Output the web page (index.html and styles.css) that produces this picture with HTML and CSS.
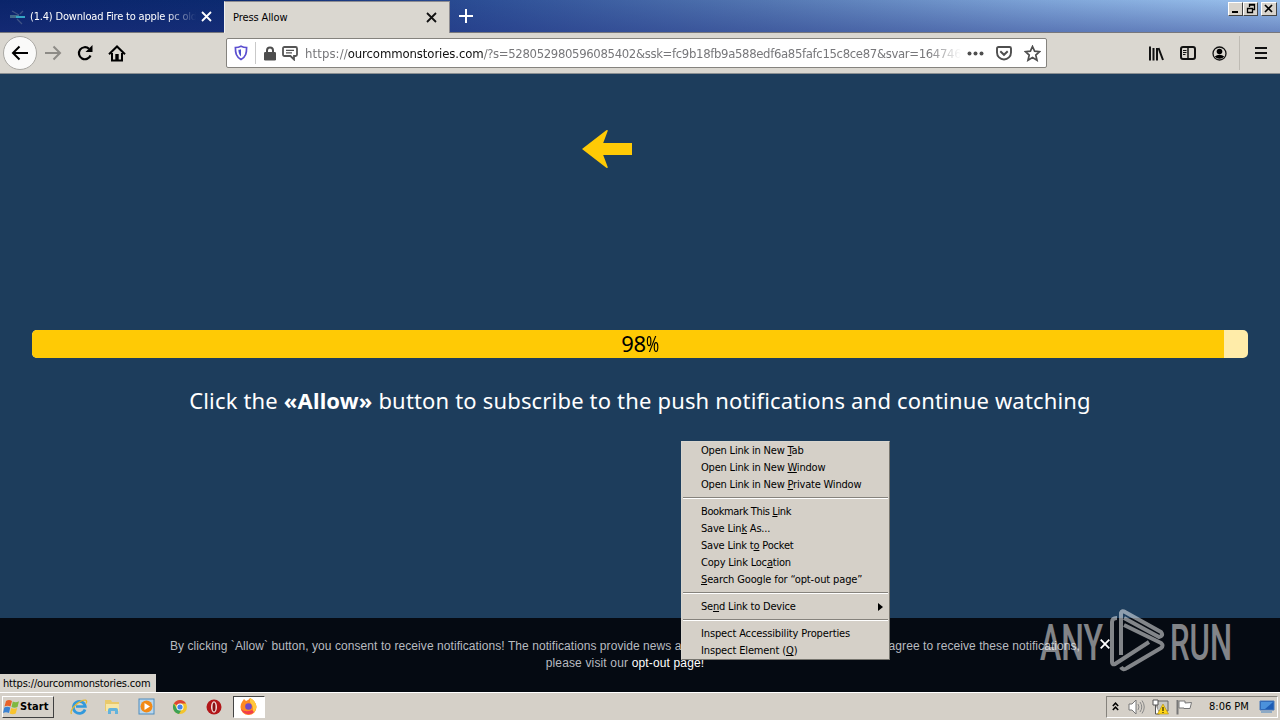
FILE: index.html
```html
<!DOCTYPE html>
<html lang="en">
<head>
<meta charset="utf-8">
<title>Press Allow</title>
<link rel="stylesheet" href="styles.css">
</head>
<body>
<div class="screen">
  <header class="titlebar">
    <div class="tab tab-back">
      <svg class="favicon" width="18" height="18" viewBox="0 0 18 18"><path d="M1 7h9v3H1z" fill="#426a88"/><path d="M7 8h9v2H7z" fill="#35a5c4"/><path d="M3 3l7 4M8 11l5 5M11 6l3-3" stroke="#3f5385" stroke-width="1.300"/></svg>
      <span class="tab-title faded">(1.4) Download Fire to apple pc old</span>
      <svg class="close" width="11" height="11" viewBox="0 0 11 11"><path d="M1 1l9 9M10 1l-9 9" stroke="#fff" stroke-width="1.800"/></svg>
    </div>
    <div class="tab tab-front">
      <span class="tab-title">Press Allow</span>
      <svg class="close" width="11" height="11" viewBox="0 0 11 11"><path d="M1 1l9 9M10 1l-9 9" stroke="#111" stroke-width="1.800"/></svg>
    </div>
    <svg class="newtab" width="14" height="14" viewBox="0 0 14 14"><path d="M7 0v14M0 7h14" stroke="#fff" stroke-width="2"/></svg>
    <div class="winbtns">
      <span class="wbtn"><svg width="14" height="12"><path d="M3 8h6v2H3z"/></svg></span>
      <span class="wbtn"><svg width="14" height="12"><path d="M5.500 4V1.500h5v5H9M5 2h6M3.500 5.500h5v4h-5zM3 5.500h6" fill="none" stroke="#000" stroke-width="1.300"/></svg></span>
      <span class="wbtn last"><svg width="14" height="12"><path d="M3 2l7 7M10 2l-7 7" stroke="#000" stroke-width="1.700"/></svg></span>
    </div>
  </header>

  <nav class="toolbar">
    <span class="back"><svg width="18" height="16" viewBox="0 0 18 16"><path d="M17 8H2M8.500 1.500L2 8l6.500 6.500" fill="none" stroke="#000" stroke-width="2"/></svg></span>
    <svg class="fwd" width="18" height="16" viewBox="0 0 18 16"><path d="M1 8h14M9.500 1.500L16 8l-6.500 6.500" fill="none" stroke="#8d8b86" stroke-width="2"/></svg>
    <svg class="reload" width="16" height="16" viewBox="0 0 16 16"><path d="M13.500 10.500A6 6 0 1 1 12 3.800" fill="none" stroke="#000" stroke-width="2.200"/><path d="M15.500 0v7H8.500z"/></svg>
    <svg class="home" width="18" height="17" viewBox="0 0 18 17"><path d="M1 9.300L9 1.500l8 7.800" fill="none" stroke="#000" stroke-width="2"/><path d="M4 8v7.500h10V8" fill="none" stroke="#000" stroke-width="2"/><path d="M7.300 9h3.400v6H7.300z"/></svg>
    <div class="urlbar">
      <svg class="shield" width="14" height="16" viewBox="0 0 14 16"><path d="M7 1.200c2 1 3.800 1.300 5.600 1.300 0 5.500-.6 9.300-5.600 12-5-2.700-5.600-6.500-5.600-12C3.200 2.500 5 2.200 7 1.200z" fill="#fff" stroke="#5c4fd0" stroke-width="1.700"/><path d="M7 4.200v7.200C5 9.500 4.500 7.500 4.400 4.800 5.300 4.700 6.200 4.500 7 4.200z" fill="#4b50cf"/></svg>
      <i class="usep"></i>
      <svg class="lock" width="12" height="15" viewBox="0 0 12 15"><path d="M3 7V4.500a3 3 0 0 1 6 0V7" fill="none" stroke="#4e4e4e" stroke-width="2"/><rect y="6" width="12" height="8.500" rx="1.300" fill="#4e4e4e"/></svg>
      <svg class="bubble" width="16" height="15" viewBox="0 0 16 15"><path d="M2.500 1h11Q15 1 15 2.500v6Q15 10 13.500 10H12v3.500L8.500 10h-6Q1 10 1 8.500v-6Q1 1 2.500 1z" fill="#fff" stroke="#555" stroke-width="1.800"/><path d="M4 4.300h8M4 6.900h6" stroke="#555" stroke-width="1.200"/></svg>
      <span class="url"><span class="scheme">https://</span><b>ourcommonstories.com</b>/?s=528052980596085402&amp;ssk=fc9b18fb9a588edf6a85fafc15c8ce87&amp;svar=164746</span>
      <svg class="dots" width="17" height="5" viewBox="0 0 17 5" fill="#4e4e4e"><circle cx="2.500" cy="2.500" r="2"/><circle cx="8.500" cy="2.500" r="2"/><circle cx="14.500" cy="2.500" r="2"/></svg>
      <svg class="pocket" width="16" height="15" viewBox="0 0 16 15"><path d="M2.500 1h11Q15 1 15 2.500V6.500a7 7 0 0 1-14 0V2.500Q1 1 2.500 1z" fill="none" stroke="#4e4e4e" stroke-width="1.900"/><path d="M4.300 5.300L8 8.800l3.700-3.500" fill="none" stroke="#4e4e4e" stroke-width="2"/></svg>
      <svg class="star" width="17" height="17" viewBox="0 0 17 17"><path d="M8.500 1.500l2.100 4.700 5 .5-3.800 3.400 1.200 5.100-4.500-2.700L4 15.200l1.200-5.100-3.800-3.400 5-.5z" fill="none" stroke="#4e4e4e" stroke-width="1.700"/></svg>
    </div>
    <svg class="library" width="16" height="15" viewBox="0 0 16 15"><path d="M2 0.500v14M5.500 2v12.500M9 2v12.500M10.500 2l4.500 12" stroke="#111" stroke-width="2"/></svg>
    <svg class="sidebar" width="16" height="14" viewBox="0 0 16 14"><rect x="1" y="1" width="14" height="12" rx="2" fill="none" stroke="#111" stroke-width="2"/><path d="M8 1v12" stroke="#111" stroke-width="1.500"/><path d="M3 4.500h3.500M3 6.500h3.500M3 8.500h2.500" stroke="#111"/></svg>
    <svg class="account" width="15" height="15" viewBox="0 0 15 15"><circle cx="7.500" cy="7.500" r="6.500" fill="none" stroke="#111" stroke-width="1.300"/><circle cx="7.500" cy="5.500" r="2.800"/><path d="M2.800 10.500q2-1.700 4.700-1.700t4.700 1.700q-1.700 2.200-4.700 2.200t-4.700-2.200z"/></svg>
    <i class="tsep"></i>
    <svg class="burger" width="12" height="12" viewBox="0 0 12 12"><path d="M0 1h12M0 6h12M0 11h12" stroke="#111" stroke-width="2"/></svg>
  </nav>

  <main class="page">
    <svg class="arrow" width="50" height="40" viewBox="0 0 50 40"><path d="M0 20L24.300 1.300Q26 .5 25.700 2L21.200 14H50v12H21.200l4.500 12q.3 1.500-1.400.7z" fill="#ffca05"/></svg>
    <div class="progress"><div class="fill" style="width:98%"></div><span class="percent">98<i>%</i></span></div>
    <p class="message">Click the <b>«Allow»</b> button to subscribe to the push notifications and continue watching</p>
    <footer class="consent">
      <p class="line1"><span>By clicking `Allow` button, you consent to receive notifications! The notifications provide news and updates.</span><span>If you don't agree to receive these notifications,</span></p>
      <p class="line2">please visit our <a>opt-out page!</a></p>
      <svg class="dismiss" width="10" height="10" viewBox="0 0 10 10"><path d="M.7.7l8.600 8.600M9.300.7L.7 9.300" stroke="#fff" stroke-width="1.800"/></svg>
    </footer>
    <div class="status">https://ourcommonstories.com</div>
  </main>

  <div class="taskbar">
    <div class="start"><svg width="17" height="16" viewBox="0 0 17 16"><path d="M3 2q3-2 6 0L7.500 7.500q-3-1.500-6 0z" fill="#e8622a"/><path d="M9.800 2.500q3 1.500 6.200-.3L14.500 8q-3 1.500-6 0z" fill="#7fb841"/><path d="M1.300 8.500q3-1.500 6 0L6 14q-3-1.500-6 0z" fill="#3b82d2"/><path d="M8.200 9q3 1.500 6 0l-1.500 5.500q-3 1.500-6 0z" fill="#f8c32d"/></svg>Start</div>
    <span class="app"><svg width="18" height="18" viewBox="0 0 18 18"><path d="M15 11.500a6 6 0 1 1 .3-3H6" fill="none" stroke="#3299dc" stroke-width="2.700"/><path d="M1.500 16C-1 12 9 2 15.500 2.200q2 .5.500 3.300" fill="none" stroke="#e5b934" stroke-width="1.300"/></svg></span>
    <span class="app"><svg width="17" height="17" viewBox="0 0 17 17"><path d="M1 2h6l1 2h7v9H1z" fill="#e9c96b"/><path d="M2 6h13v7H2z" fill="#f7e6a5"/><path d="M4 16v-4q0-2 2-2h6q2 0 2 2v4h-3v-3H7v3z" fill="#63b3dc"/></svg></span>
    <span class="app"><svg width="17" height="17" viewBox="0 0 17 17"><rect x="1" y="1" width="15" height="15" fill="#b9d7ee" stroke="#4e8cbd"/><circle cx="8.500" cy="8.500" r="6" fill="#f28a16"/><path d="M6.500 5l5.500 3.500-5.500 3.500z" fill="#fff"/></svg></span>
    <span class="app"><svg width="16" height="16" viewBox="0 0 16 16"><circle cx="8" cy="8" r="7" fill="#f3c42c"/><path d="M8 8L1.900 4.500A7 7 0 0 1 14 4.500H8z" fill="#dc4436"/><path d="M1.900 4.500A7 7 0 0 0 7 15l3.300-5.700L5 10z" fill="#3da155"/><circle cx="8" cy="8" r="3.500" fill="#fff"/><circle cx="8" cy="8" r="2.600" fill="#4183e8"/></svg></span>
    <span class="app"><svg width="16" height="16" viewBox="0 0 16 16"><circle cx="8" cy="8" r="7.500" fill="#b21619"/><ellipse cx="8" cy="8" rx="3" ry="5.800" fill="#f4e1df"/><ellipse cx="8" cy="8" rx="1.500" ry="4.600" fill="#871114"/></svg></span>
    <span class="app active"><svg width="17" height="17" viewBox="0 0 17 17"><path d="M2 4l2-3 2 2q3-1 4-3 6 3 6.500 9a8 8 0 0 1-16 0Q.5 6 2 4z" fill="#ff8a21"/><path d="M10 0q6 3 6.500 9-1 5-4 6 2-6-2.500-11z" fill="#ffc83c"/><path d="M1 11q4 4 11 1l2 2a8 8 0 0 1-13-3z" fill="#f13e4d"/><circle cx="8.500" cy="8.500" r="3.300" fill="#704bc8"/></svg></span>
    <div class="tray">
      <svg class="chev" width="7" height="9" viewBox="0 0 7 9"><path d="M.8 4L3.500 1.200 6.200 4M.8 8l2.700-2.800L6.200 8" fill="none" stroke="#000" stroke-width="1.500"/></svg>
      <svg class="sound" width="17" height="16" viewBox="0 0 17 16"><path d="M1 5h3l4-4v14l-4-4H1z" fill="#fff" stroke="#777"/><path d="M10 5q2 3 0 6M12 3q3.500 5 0 10M14 1.500q4.500 6.500 0 13" fill="none" stroke="#888"/></svg>
      <svg class="net" width="17" height="16" viewBox="0 0 17 16"><path d="M5 2h11v10H5z" fill="#c9c9c4" stroke="#666"/><path d="M1 1h5v5H1zM3.500 6v9h4" fill="#fff" stroke="#555"/><path d="M11 5l5.500 10h-11z" fill="#ffd616" stroke="#b18b08" stroke-width=".6"/><path d="M10.500 8h1v4h-1zM10.500 13h1v1h-1z"/></svg>
      <svg class="flag" width="17" height="16" viewBox="0 0 17 16"><path d="M1.500 1v14.500" stroke="#777" stroke-width="2"/><path d="M3 2h6v2l6.500-.5L14 9.500H8V9H3z" fill="#fff" stroke="#777"/></svg>
      <span class="clock">8:06 PM</span>
      <svg class="desk" width="16" height="14" viewBox="0 0 16 14"><path d="M1 1h14v9H1z" fill="#1d5cb5" stroke="#497bbb"/><path d="M2 2h12L6 9H2z" fill="#4b91db"/><path d="M2 12h11" stroke="#8daac5" stroke-width="2"/></svg>
    </div>
  </div>

  <svg class="watermark" width="200" height="66" viewBox="0 0 200 66">
    <text x="3" y="51" textLength="63" lengthAdjust="spacingAndGlyphs">ANY</text>
    <g fill="none" stroke="#fff" stroke-opacity=".5" stroke-width="4" stroke-linejoin="round">
      <path d="M80 9q-5 0-5 4v40q0 3 3 2l34-22"/>
      <path d="M84 46V4q1-3 4-1l36 20q3 4-2 5L87 9"/>
      <path d="M84 58q2 4 6 1l34-20q3-2 0-5L87 16"/>
    </g>
    <text x="133" y="51" textLength="62" lengthAdjust="spacingAndGlyphs">RUN</text>
  </svg>

  <div class="menu">
    <div>Open Link in New <u>T</u>ab</div>
    <div>Open Link in New <u>W</u>indow</div>
    <div>Open Link in New <u>P</u>rivate Window</div>
    <hr>
    <div class="tight">Bookmark This <u>L</u>ink</div>
    <div>Save Lin<u>k</u> As...</div>
    <div>Save Link t<u>o</u> Pocket</div>
    <div>Copy Link Loc<u>a</u>tion</div>
    <div class="wide"><u>S</u>earch Google for “opt-out page”</div>
    <hr>
    <div class="sub">Se<u>n</u>d Link to Device<svg width="5" height="8"><path d="M0 0l5 4-5 4z"/></svg></div>
    <hr>
    <div class="wide">Inspect Accessibility Properties</div>
    <div class="wide">Inspect Element (<u>Q</u>)</div>
  </div>
</div>
</body>
</html>
```
FILE: styles.css
```css
* { box-sizing: border-box; }
body { margin: 0; font-family: "DejaVu Sans Condensed", "DejaVu Sans", sans-serif; font-stretch: condensed; font-size: 11px; color: #000; }
svg { display: block; flex: none; }
p { margin: 0; }
.screen { position: relative; width: 1280px; height: 720px; overflow: hidden; display: flex; flex-direction: column; }

.titlebar { height: 33px; display: flex; border-bottom: 1px solid #77777c; background: linear-gradient(180deg, rgba(160,200,240,0) 0%, rgba(35,50,130,.4) 100%), linear-gradient(90deg, #0a246a 0%, #0c2a70 18%, #2d4f96 38%, #5477b2 60%, #7fa5d8 82%, #9cc3ee 100%); }
.tab { display: flex; align-items: center; height: 32px; padding-top: 1px; }
.tab-back { width: 224px; padding-left: 9px; color: #fff; }
.tab-front { width: 226px; height: 33px; margin-top: 1px; padding: 0 0 2px 8px; background: #dad7d0; border: solid #8d8c91; border-width: 1px 1px 0; border-left-color: #f2f1ee; }
.tab-title { flex: 1; white-space: nowrap; overflow: hidden; letter-spacing: -.1px; }
.tab-back .tab-title { margin-left: 3px; letter-spacing: -.18px; }
.faded { -webkit-mask-image: linear-gradient(90deg, #000 82%, transparent); mask-image: linear-gradient(90deg, #000 82%, transparent); }
.close { margin: 0 12px 0 5px; }
.tab-front .close { margin-right: 12px; }
.newtab { margin: 9px 0 0 9px; }
.winbtns { display: flex; margin: 2px 3px 0 auto; }
.wbtn { width: 15px; height: 14px; background: #d8d4cd; border: 1px solid; border-color: #fff #444 #444 #fff; }
.wbtn.last { margin-left: 3px; width: 16px; }

.toolbar { height: 41px; display: flex; align-items: center; background: #dad7d0; border-bottom: 1px solid #8b8f92; }
.back { width: 34px; height: 34px; margin-left: 3px; border: 1px solid #aaa8a3; border-radius: 50%; background: #fafaf9; display: flex; align-items: center; justify-content: center; }
.fwd { margin-left: 7px; }
.reload { margin-left: 15px; }
.home { margin-left: 15px; }
.urlbar { display: flex; align-items: center; width: 821px; height: 30px; margin-left: 100px; padding-left: 7px; background: #fff; border: 1px solid #85837e; border-radius: 2px; }
.usep { width: 1px; height: 22px; margin-left: 7px; background: #c9c9c9; }
.lock { margin-left: 8px; }
.bubble { margin-left: 6px; }
.url { width: 656px; margin-left: 7px; overflow: hidden; white-space: nowrap; font-size: 13px; letter-spacing: -.35px; color: #77777a; -webkit-mask-image: linear-gradient(90deg, #000 95%, transparent); mask-image: linear-gradient(90deg, #000 95%, transparent); }
.scheme { letter-spacing: .1px; }
.url b { font-weight: 400; color: #111; letter-spacing: -.1px; }
.dots { margin-left: 6px; }
.pocket { margin-left: 12px; }
.star { margin-left: 12px; }
.library { margin-left: 101px; }
.sidebar { margin-left: 16px; }
.account { margin-left: 16px; }
.tsep { width: 1px; height: 34px; margin-left: 12px; background: #bebbb4; }
.burger { margin-left: 15px; }

.page { position: relative; height: 618px; display: flex; flex-direction: column; background: #1d3d5c; }
.arrow { margin: 55px 0 0 582px; }
.progress { position: relative; height: 28px; margin: 161px 32px 0; border-radius: 5px; overflow: hidden; background: #ffeca9; display: flex; }
.fill { height: 28px; background: #ffca05; }
.percent { position: absolute; inset: 0; text-align: center; font: 22px/27px "Noto Sans", sans-serif; letter-spacing: -.4px; }
.percent i { font-style: normal; display: inline-block; width: 13px; transform: scaleX(.72); transform-origin: 0 50%; }
.message { margin-top: 26px; text-align: center; white-space: nowrap; font: 22px/32px "Noto Sans", sans-serif; letter-spacing: .17px; color: #fff; }
.consent { position: relative; height: 74px; margin-top: auto; padding-top: 20px; text-align: center; background: #050a12; color: #b8bbc0; font: 12px/17px "Liberation Sans", Arial, sans-serif; letter-spacing: .07px; white-space: nowrap; }
.line1 { display: flex; justify-content: space-between; width: 910px; margin-left: 170px; }
.line2 { padding-right: 30px; letter-spacing: .15px; }
.consent a { color: #fff; }
.dismiss { position: absolute; left: 1100px; top: 21px; }
.status { position: absolute; left: 0; bottom: 0; height: 18px; width: 156px; padding-left: 3px; line-height: 20px; background: #d8d4cc; white-space: nowrap; letter-spacing: -.17px; }

.taskbar { flex: 1; display: flex; align-items: center; background: #d5d0c8; border-top: 1px solid #fff; }
.start { display: flex; align-items: center; width: 52px; height: 22px; margin: 0 8px 0 2px; font-weight: 700; letter-spacing: .1px; border: 1px solid; border-color: #fff #404040 #404040 #fff; }
.app { width: 33.800px; height: 22px; display: flex; align-items: center; justify-content: center; }
.app.active { width: 32px; margin-left: 2px; background: #fff; border: 1px solid; border-color: #444 #fff #fff #444; }
.tray { display: flex; align-items: center; width: 172px; height: 22px; margin: 0 2px 0 auto; padding-left: 5px; border: 1px solid; border-color: #85827c #fff #fff #85827c; }
.sound { margin-left: 9px; }
.net { margin-left: 7px; }
.flag { margin-left: 7px; }
.clock { width: 40px; margin-left: 16px; white-space: nowrap; letter-spacing: 0; }
.desk { margin-left: 10px; }

.menu { position: absolute; left: 681px; top: 441px; width: 209px; height: 219px; padding: 0 1px; background: #d5d0c8; border: 1px solid #77756f; border-top-color: #d9d6cf; border-left-color: #d9d6cf; letter-spacing: -.2px; }
.menu div { height: 17px; padding-left: 18px; line-height: 17px; white-space: nowrap; }
.menu .tight { letter-spacing: -.38px; }
.menu .wide { letter-spacing: -.13px; }
.menu hr { height: 2px; margin: 4px 0; border: 0; border-top: 1px solid #85827c; background: #fff; }
.menu u { text-underline-offset: 1px; }
.menu .sub { display: flex; align-items: center; }
.sub svg { margin: 0 5px 0 auto; }

.watermark { position: absolute; left: 1037px; top: 609px; pointer-events: none; }
.watermark text { font: 500 50px Roboto, sans-serif; fill: #fff; fill-opacity: .5; }
```
